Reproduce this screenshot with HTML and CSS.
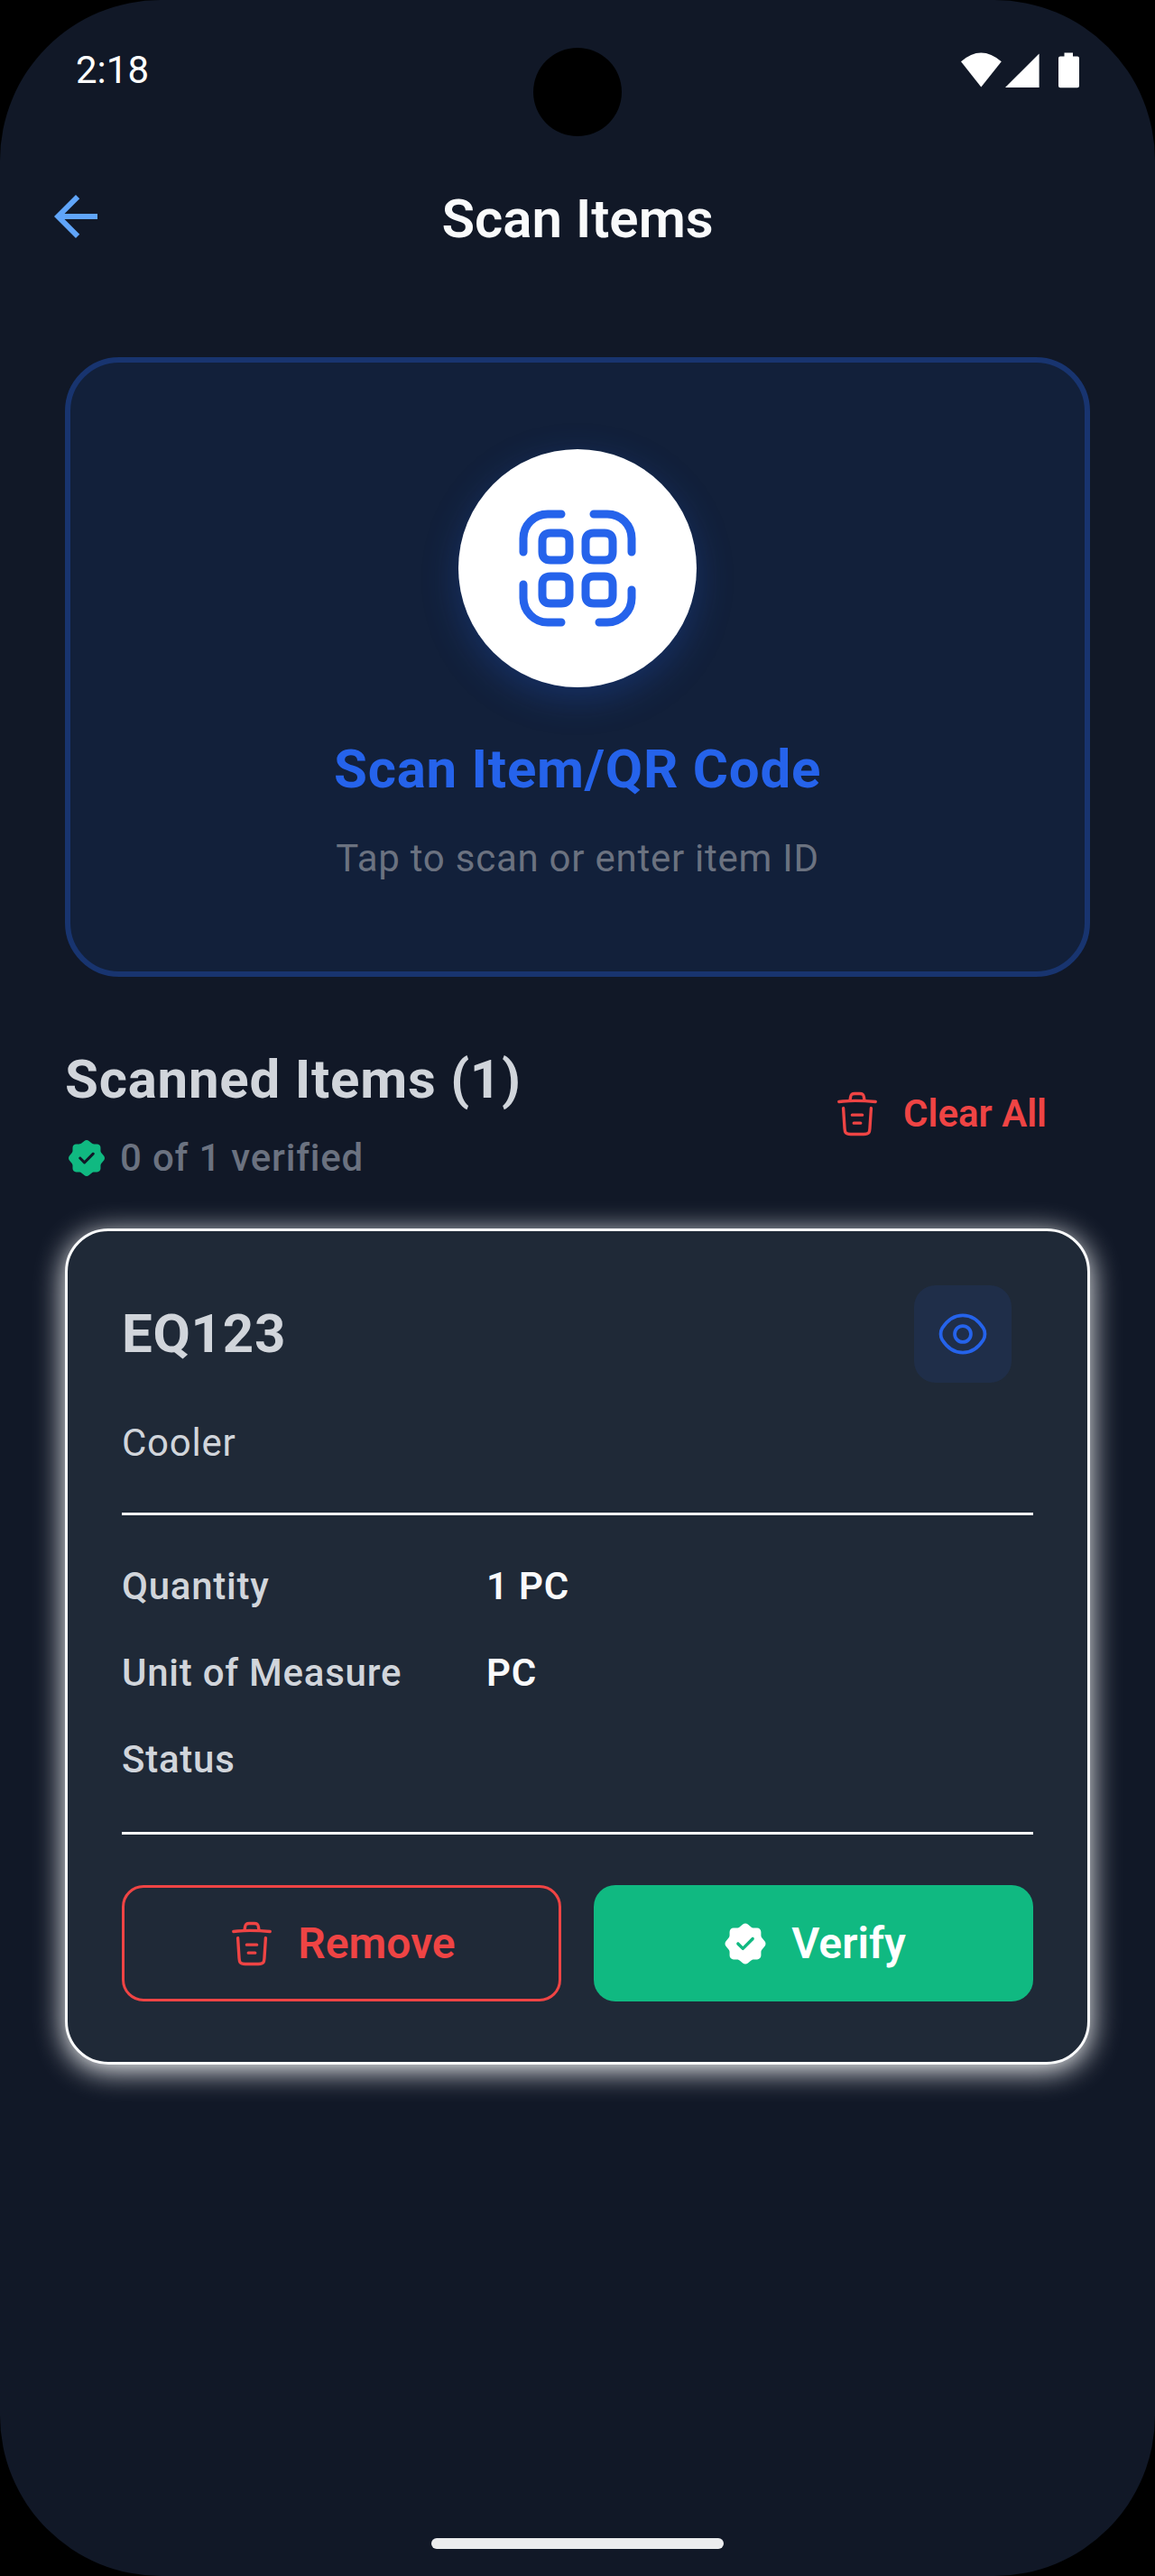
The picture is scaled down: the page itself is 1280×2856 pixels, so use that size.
FILE: index.html
```html
<!DOCTYPE html>
<html lang="en">
<head>
<meta charset="utf-8">
<title>Scan Items</title>
<link rel="stylesheet" href="styles.css">
</head>
<body>
<svg class="sprite" width="0" height="0" aria-hidden="true">
  <symbol id="trash" viewBox="0 0 24 24">
    <g fill="none" stroke="currentColor" stroke-width="1.5" stroke-linecap="round" stroke-linejoin="round">
      <path d="M21 5.98C17.67 5.65 14.32 5.48 10.98 5.48C9 5.48 7.02 5.58 5.04 5.78L3 5.98"/>
      <path d="M8.5 4.97L8.72 3.66C8.88 2.71 9 2 10.69 2H13.31C15 2 15.13 2.75 15.28 3.67L15.5 4.97"/>
      <path d="M18.85 9.14L18.2 19.21C18.09 20.78 18 22 15.21 22H8.79C6 22 5.91 20.78 5.8 19.21L5.15 9.14"/>
      <path d="M10.33 16.5H13.66M9.5 12.5H14.5"/>
    </g>
  </symbol>
  <symbol id="verify" viewBox="0 0 24 24">
    <path fill="currentColor" d="M21.56 10.74l-1.36-1.58c-.26-.3-.47-.86-.47-1.26V6.2c0-1.06-.87-1.93-1.93-1.93h-1.7c-.39 0-.96-.21-1.26-.47l-1.58-1.36c-.69-.59-1.82-.59-2.52 0l-1.57 1.37c-.3.25-.87.46-1.26.46H6.18c-1.06 0-1.93.87-1.93 1.93v1.71c0 .39-.21.95-.46 1.25l-1.35 1.59c-.58.69-.58 1.81 0 2.5l1.35 1.59c.25.3.46.86.46 1.25v1.71c0 1.06.87 1.93 1.93 1.93h1.73c.39 0 .96.21 1.26.47l1.58 1.36c.69.59 1.82.59 2.52 0l1.58-1.36c.3-.26.86-.47 1.26-.47h1.7c1.06 0 1.93-.87 1.93-1.93v-1.7c0-.39.21-.96.47-1.26l1.36-1.58c.58-.69.58-1.83-.01-2.52zm-5.4-.63l-4.83 4.83a.75.75 0 01-1.06 0l-2.42-2.42a.754.754 0 010-1.06c.29-.29.77-.29 1.06 0l1.89 1.89 4.3-4.3c.29-.29.77-.29 1.06 0 .29.29.29.77 0 1.06z"/>
  </symbol>
</svg>
<div class="screen">
  <div class="camera"></div>
  <div class="status-bar">
    <span class="clock">2:18</span>
    <svg class="status-icons" viewBox="0 0 132 40" width="132" height="40" fill="#fff">
      <path d="M1 10.3Q23.1 -9.3 45.8 10.3L23.3 38.5Z"/>
      <path d="M50 39L87.6 1.5V39Z"/>
      <path d="M110 4.5H115.5V0.5H125V4.5H130Q132 4.5 132 6.5V37.3Q132 39.3 130 39.3H111Q109 39.3 109 37.3V6.5Q109 4.5 111 4.5Z"/>
    </svg>
  </div>
  <header class="app-bar">
    <svg class="back" viewBox="0 0 24 24" width="72" height="72" fill="#60a5fa"><path d="M20 11H7.83l5.59-5.59L12 4l-8 8 8 8 1.41-1.41L7.83 13H20v-2z"/></svg>
    <h1 class="page-title">Scan Items</h1>
  </header>
  <main class="content">
    <section class="scan-card">
      <div class="scan-circle">
        <svg viewBox="0 0 24 24" width="144" height="144" fill="none" stroke="#2563eb" stroke-width="1.5" stroke-linecap="round" stroke-linejoin="round">
          <path d="M2 9V6.5C2 4.01 4.01 2 6.5 2H9M15 2H17.5C19.99 2 22 4.01 22 6.5V9M22 16V17.5C22 19.99 19.99 22 17.5 22H16M9 22H6.5C4.01 22 2 19.99 2 17.5V15"/>
          <path id="cell" d="M10.5 7V9C10.5 10 10 10.5 9 10.5H7C6 10.5 5.5 10 5.5 9V7C5.5 6 6 5.5 7 5.5H9C10 5.5 10.5 6 10.5 7Z"/>
          <use href="#cell" x="8"/><use href="#cell" y="8"/><use href="#cell" x="8" y="8"/>
        </svg>
      </div>
      <h2 class="scan-title">Scan Item/QR Code</h2>
      <p class="scan-hint">Tap to scan or enter item ID</p>
    </section>

    <section class="list-head">
      <div>
        <h2 class="list-title">Scanned Items (1)</h2>
        <div class="verified"><svg width="48" height="48"><use href="#verify"/></svg><span>0 of 1 verified</span></div>
      </div>
      <div class="clear-all"><svg width="54" height="54"><use href="#trash"/></svg><span>Clear All</span></div>
    </section>

    <article class="item-card">
      <div class="item-head">
        <h3 class="item-id">EQ123</h3>
        <div class="view-button">
          <svg viewBox="0 0 24 24" width="60" height="60" fill="none" stroke="#2563eb" stroke-width="1.5" stroke-linecap="round" stroke-linejoin="round">
            <path d="M15.58 12C15.58 13.98 13.98 15.58 12 15.58C10.02 15.58 8.42 13.98 8.42 12C8.42 10.02 10.02 8.42 12 8.42C13.98 8.42 15.58 10.02 15.58 12Z"/>
            <path d="M12 20.27C15.53 20.27 18.82 18.19 21.11 14.59C22.01 13.18 22.01 10.81 21.11 9.4C18.82 5.8 15.53 3.72 12 3.72C8.47 3.72 5.18 5.8 2.89 9.4C1.99 10.81 1.99 13.18 2.89 14.59C5.18 18.19 8.47 20.27 12 20.27Z"/>
          </svg>
        </div>
      </div>
      <p class="item-name">Cooler</p>
      <dl class="details">
        <dt>Quantity</dt><dd>1 PC</dd>
        <dt>Unit of Measure</dt><dd>PC</dd>
        <dt>Status</dt><dd></dd>
      </dl>
      <div class="actions">
        <div class="button remove"><svg width="54" height="54"><use href="#trash"/></svg><span>Remove</span></div>
        <div class="button verify"><svg width="54" height="54"><use href="#verify"/></svg><span>Verify</span></div>
      </div>
    </article>
  </main>
  <div class="home-bar"></div>
</div>
</body>
</html>
```
FILE: styles.css
```css
* { box-sizing: border-box; margin: 0; padding: 0; }
body {
  background: #000;
  font-family: Roboto, sans-serif;
  font-size: 42px;
  line-height: 50px;
  color: #d1d5db;
}
svg { display: block; flex: none; }
.sprite { position: absolute; }
.screen {
  position: relative;
  display: flex;
  flex-direction: column;
  width: 1280px;
  height: 2856px;
  overflow: hidden;
  background: #111827;
  border-radius: 178px;
}
.camera {
  position: absolute;
  left: 591px;
  top: 53px;
  width: 98px;
  height: 98px;
  border-radius: 50%;
  background: #000;
}
.status-bar {
  display: flex;
  justify-content: space-between;
  align-items: center;
  height: 156px;
  padding: 0 84px;
}
.clock { color: #fff; }
.status-icons, .clock { margin-bottom: 1px; }
.app-bar {
  display: grid;
  grid-template-columns: 72px 1fr 72px;
  align-items: center;
  height: 168px;
  padding: 0 48px;
}
.page-title {
  padding-top: 5px;
  color: #f9fafb;
  font-size: 60px;
  font-weight: 600;
  line-height: 70px;
  text-align: center;
}
.content { flex: 1; padding: 72px 72px 0; }
.scan-card {
  display: flex;
  flex-direction: column;
  align-items: center;
  height: 687px;
  padding-top: 96px;
  border: 6px solid #18346f;
  border-radius: 60px;
  background: #12203a;
}
.scan-circle {
  display: flex;
  align-items: center;
  justify-content: center;
  width: 264px;
  height: 264px;
  border-radius: 50%;
  background: #fff;
  box-shadow: 0 12px 40px rgba(37, 99, 235, .25);
}
.scan-title {
  margin-top: 56px;
  color: #2563eb;
  font-size: 60px;
  font-weight: 700;
  line-height: 70px;
  letter-spacing: .75px;
}
.scan-hint { margin-top: 39px; color: #6b7280; letter-spacing: .75px; }
.list-head {
  display: flex;
  justify-content: space-between;
  align-items: center;
  height: 147px;
  margin: 78px 48px 54px 0;
}
.list-title {
  padding-top: 1px;
  font-size: 60px;
  font-weight: 700;
  line-height: 72px;
  letter-spacing: .75px;
}
.verified {
  display: flex;
  align-items: center;
  gap: 13px;
  margin-top: 26px;
  color: #6b7280;
  font-weight: 500;
  letter-spacing: .8px;
}
.verified svg { color: #10b981; }
.clear-all {
  display: flex;
  align-items: center;
  gap: 24px;
  color: #ef4444;
  font-weight: 600;
}
.item-card {
  height: 927px;
  padding: 60px;
  border: 3px solid #f9fafb;
  border-radius: 48px;
  background: #1f2937;
  box-shadow: 0 6px 32px #f9fafb;
}
.item-head {
  display: flex;
  align-items: center;
  justify-content: space-between;
  padding-right: 24px;
}
.item-id { font-size: 60px; font-weight: 700; line-height: 72px; letter-spacing: .75px; }
.view-button {
  display: flex;
  align-items: center;
  justify-content: center;
  width: 108px;
  height: 108px;
  border-radius: 24px;
  background: rgba(37, 99, 235, .1);
}
.item-name { margin: 42px 0 52px; letter-spacing: .75px; }
.details {
  display: grid;
  grid-template-columns: 40% 60%;
  grid-auto-rows: 50px;
  row-gap: 46px;
  height: 357px;
  padding-top: 54px;
  border-top: 3px solid #f9fafb;
  border-bottom: 3px solid #f9fafb;
  font-weight: 500;
  letter-spacing: .75px;
}
.details dd { color: #f9fafb; font-weight: 600; }
.actions {
  display: grid;
  grid-template-columns: 1fr 1fr;
  gap: 36px;
  margin-top: 56px;
}
.button {
  display: flex;
  align-items: center;
  justify-content: center;
  gap: 24px;
  height: 129px;
  border-radius: 24px;
  font-size: 48px;
  font-weight: 600;
}
.remove { border: 3px solid #ef4444; color: #ef4444; }
.verify { background: #10b981; color: #fff; }
.home-bar {
  align-self: center;
  width: 324px;
  height: 12px;
  margin-bottom: 30px;
  border-radius: 6px;
  background: #ebecee;
}
```
